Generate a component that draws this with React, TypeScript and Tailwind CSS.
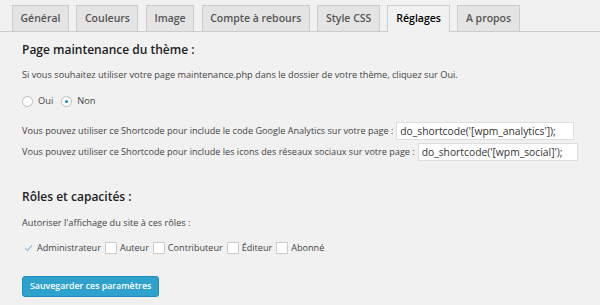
import * as React from 'react';

const tabs = ['Général', 'Couleurs', 'Image', 'Compte à rebours', 'Style CSS', 'Réglages', 'A propos'];
const active = 'Réglages';

const roles = [
  { label: 'Administrateur', checked: true },
  { label: 'Auteur', checked: false },
  { label: 'Contributeur', checked: false },
  { label: 'Éditeur', checked: false },
  { label: 'Abonné', checked: false },
];

export default function App() {
  const [mode, setMode] = React.useState<'oui' | 'non'>('non');

  return (
    <div
      className="h-[305px] w-[600px] overflow-hidden bg-[#f1f1f1] text-[#444]"
      style={{ fontFamily: '"Open Sans", "Liberation Sans", sans-serif' }}
    >
      {/* Onglets */}
      <div className="flex items-end gap-[7.5px] border-b border-[#ccc] pl-[12px] pt-[5px]">
        {tabs.map(t => (
          <div
            key={t}
            className={
              t === active
                ? '-mb-px flex h-[27px] items-center border border-b-0 border-[#ccc] bg-[#f1f1f1] px-[8px] pb-px text-[10.5px] font-semibold text-black'
                : 'flex h-[26px] items-center border border-b-0 border-[#ccc] bg-[#e4e4e4] px-[7.5px] text-[10.5px] font-semibold text-[#555]'
            }
          >
            {t}
          </div>
        ))}
      </div>

      <div className="px-[22px]">
        {/* Page maintenance */}
        <h2 className="mt-[9px] h-[18px] text-[12px] font-semibold leading-[18px] text-[#222]">Page maintenance du thème :</h2>
        <p className="mt-[9px] h-[14px] whitespace-nowrap text-[9.2px] leading-[14px]">
          Si vous souhaitez utiliser votre page maintenance.php dans le dossier de votre thème, cliquez sur Oui.
        </p>

        <div className="mt-[12px] flex h-[14px] items-center text-[9.3px]">
          <label className="flex items-center gap-[5px]" onClick={() => setMode('oui')}>
            <Radio on={mode === 'oui'} />
            <span>Oui</span>
          </label>
          <label className="ml-[8px] flex items-center gap-[5px]" onClick={() => setMode('non')}>
            <Radio on={mode === 'non'} />
            <span>Non</span>
          </label>
        </div>

        <div className="mt-[13px] flex h-[20px] items-center whitespace-nowrap text-[9.1px]">
          <span>Vous pouvez utiliser ce Shortcode pour include le code Google Analytics sur votre page :</span>
          <input
            readOnly
            value="do_shortcode('[wpm_analytics']);"
            className="ml-[3px] h-[18px] w-[178px] border border-[#ddd] bg-white px-[3px] text-[10.3px] text-[#333] outline-none"
          />
        </div>
        <div className="mt-[1px] flex h-[20px] items-center whitespace-nowrap text-[9.1px]">
          <span>Vous pouvez utiliser ce Shortcode pour include les icons des réseaux sociaux sur votre page :</span>
          <input
            readOnly
            value="do_shortcode('[wpm_social]');"
            className="ml-[3px] h-[18px] w-[178px] border border-[#ddd] bg-white px-[3px] text-[10.3px] text-[#333] outline-none"
          />
        </div>

        {/* Rôles */}
        <h2 className="mt-[26px] h-[18px] text-[12px] font-semibold leading-[18px] text-[#222]">Rôles et capacités :</h2>
        <p className="mt-[10px] h-[14px] text-[9.2px] leading-[14px]">Autoriser l'affichage du site à ces rôles :</p>

        <div className="mt-[11px] flex h-[14px] items-center text-[9.1px]">
          {roles.map((r, i) => (
            <label key={r.label} className={i === 0 ? 'flex items-center gap-[3px]' : 'ml-[4px] flex items-center gap-[3px]'}>
              {r.checked ? (
                <span className="flex h-[12px] w-[12px] items-center justify-center">
                  <svg width="9" height="8" viewBox="0 0 9 8">
                    <path d="M1 4.2 L3.4 6.4 L8 1.2" fill="none" stroke="#9cc6dd" strokeWidth="1.4" />
                  </svg>
                </span>
              ) : (
                <span className="h-[12px] w-[12px] border border-[#ccc] bg-white" />
              )}
              <span>{r.label}</span>
            </label>
          ))}
        </div>

        <button className="mt-[21px] h-[21px] rounded-[3px] border border-[#1e8cbe] bg-[#2ea2cc] px-[7px] text-[8.8px] font-semibold text-white">
          Sauvegarder ces paramètres
        </button>
      </div>
    </div>
  );
}

function Radio({ on }: { on: boolean }) {
  return (
    <span className="flex h-[11px] w-[11px] items-center justify-center rounded-full border border-[#bbb] bg-white">
      {on && <span className="h-[3px] w-[3px] rounded-full bg-[#1e8cbe]" />}
    </span>
  );
}
